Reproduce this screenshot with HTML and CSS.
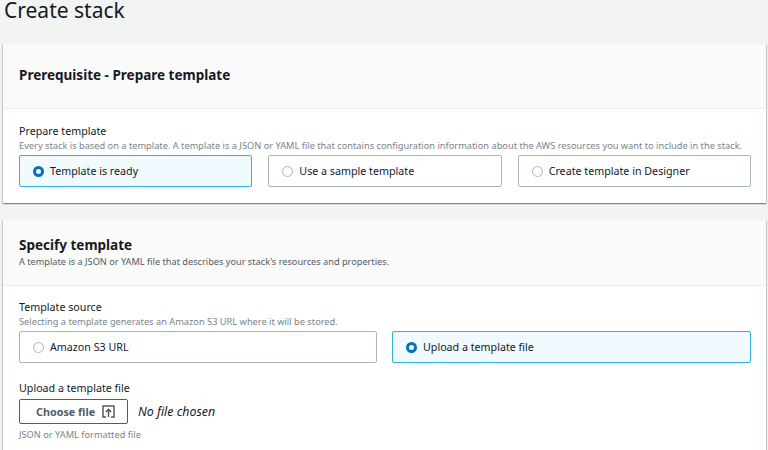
FILE: index.html
```html
<!DOCTYPE html>
<html lang="en">
<head>
<meta charset="utf-8">
<title>Create stack</title>
<link rel="stylesheet" href="styles.css">
</head>
<body>
<main class="page">
  <h1 class="title">Create stack</h1>
  <section class="card card-first">
    <header class="card-head head-plain"><h2>Prerequisite - Prepare template</h2></header>
    <div class="card-body">
      <div class="label">Prepare template</div>
      <div class="hint hint-prepare">Every stack is based on a template. A template is a JSON or YAML file that contains configuration information about the AWS resources you want to include in the stack.</div>
      <div class="tiles tiles-3">
        <div class="tile selected"><span class="radio"></span>Template is ready</div>
        <div class="tile"><span class="radio"></span>Use a sample template</div>
        <div class="tile"><span class="radio"></span>Create template in Designer</div>
      </div>
    </div>
  </section>
  <section class="card card-second">
    <header class="card-head"><h2>Specify template</h2><p>A template is a JSON or YAML file that describes your stack's resources and properties.</p></header>
    <div class="card-body body-second">
      <div class="label">Template source</div>
      <div class="hint hint-source">Selecting a template generates an Amazon S3 URL where it will be stored.</div>
      <div class="tiles tiles-2">
        <div class="tile"><span class="radio"></span>Amazon S3 URL</div>
        <div class="tile selected"><span class="radio"></span>Upload a template file</div>
      </div>
      <div class="label label-upload">Upload a template file</div>
      <div class="file-row">
        <button class="file-btn" type="button">Choose file
          <svg class="file-icon" width="13" height="13" viewBox="0 0 13 13" aria-hidden="true"><path d="M4 12H1V1h11v11H9M6.500 12V4.500M3.800 7l2.700-2.700L9.200 7" fill="none" stroke="currentColor" stroke-width="1.500"/></svg>
        </button>
        <em class="file-none">No file chosen</em>
      </div>
      <div class="hint hint-file">JSON or YAML formatted file</div>
    </div>
  </section>
</main>
</body>
</html>
```
FILE: styles.css
```css
html, body {
  margin: 0;
  height: 450px;
  overflow: hidden;
  background: #f2f3f3;
}
body {
  font-family: "Noto Sans", "Open Sans", sans-serif;
  color: #16191f;
}
.page {
  padding: 0 2px 0 3px;
}
.title {
  box-sizing: border-box;
  margin: 0;
  padding: 0 0 0 1px;
  height: 44px;
  font-size: 21px;
  line-height: 20px;
  font-weight: 400;
}
.card {
  background: #fff;
  box-shadow: 0 1px 1px 0 rgba(0, 28, 36, 0.3), 1px 1px 1px 0 rgba(0, 28, 36, 0.15), -1px 1px 1px 0 rgba(0, 28, 36, 0.15);
}
.card-first {
  height: 159px;
  margin-bottom: 17px;
}
.card-second {
  height: 230px;
}
.card-head {
  background: #fafafa;
  border-bottom: 1px solid #eaeded;
  padding: 16px 16px 0;
  height: 49px;
}
.head-plain {
  display: flex;
  align-items: center;
  padding-top: 0;
  padding-bottom: 2px;
  height: 62px;
}
.card-head h2 {
  margin: 0;
  font-size: 13.500px;
  line-height: 18px;
  font-weight: 700;
}
.card-head p {
  margin: 1px 0 0;
  font-size: 9.200px;
  line-height: 13px;
  color: #545b64;
}
.card-body {
  padding: 15px 15px 0 16px;
}
.body-second {
  padding-top: 14px;
}
.label {
  font-size: 10.700px;
  line-height: 14px;
  color: #16191f;
}
.hint {
  font-size: 9.250px;
  line-height: 13px;
  color: #7b838b;
  white-space: nowrap;
}
.hint-prepare {
  margin-top: 1px;
}
.hint-source {
  margin-top: 1px;
}
.tiles {
  display: grid;
  margin-top: 3px;
}
.tiles-3 {
  grid-template-columns: repeat(3, 1fr);
  column-gap: 16px;
}
.tiles-2 {
  grid-template-columns: 358px 1fr;
  column-gap: 15px;
}
.tile {
  box-sizing: border-box;
  height: 32px;
  display: flex;
  align-items: center;
  gap: 6px;
  padding-left: 13px;
  border: 1px solid #aab7b8;
  border-radius: 2px;
  font-size: 10.700px;
  color: #16191f;
  background: #fff;
}
.tile.selected {
  background: #f1faff;
  border-color: #2fb3d8;
}
.radio {
  box-sizing: border-box;
  width: 11px;
  height: 11px;
  border-radius: 50%;
  border: 1px solid #aab7b8;
  background: #fff;
  flex: none;
}
.selected .radio {
  border: 3.500px solid #0073bb;
}
.label-upload {
  margin-top: 18px;
}
.file-row {
  display: flex;
  align-items: center;
  gap: 10px;
  margin-top: 4px;
}
.file-btn {
  box-sizing: border-box;
  width: 109px;
  height: 25px;
  display: flex;
  align-items: center;
  gap: 7px;
  padding: 0 0 0 16px;
  border: 1px solid #545b64;
  border-radius: 2px;
  background: #fff;
  color: #545b64;
  font-family: inherit;
  font-size: 10.800px;
  font-weight: 700;
}
.file-icon {
  flex: none;
}
.file-none {
  font-size: 12.400px;
  font-style: italic;
  color: #16191f;
}
.hint-file {
  margin-top: 4px;
}
```
